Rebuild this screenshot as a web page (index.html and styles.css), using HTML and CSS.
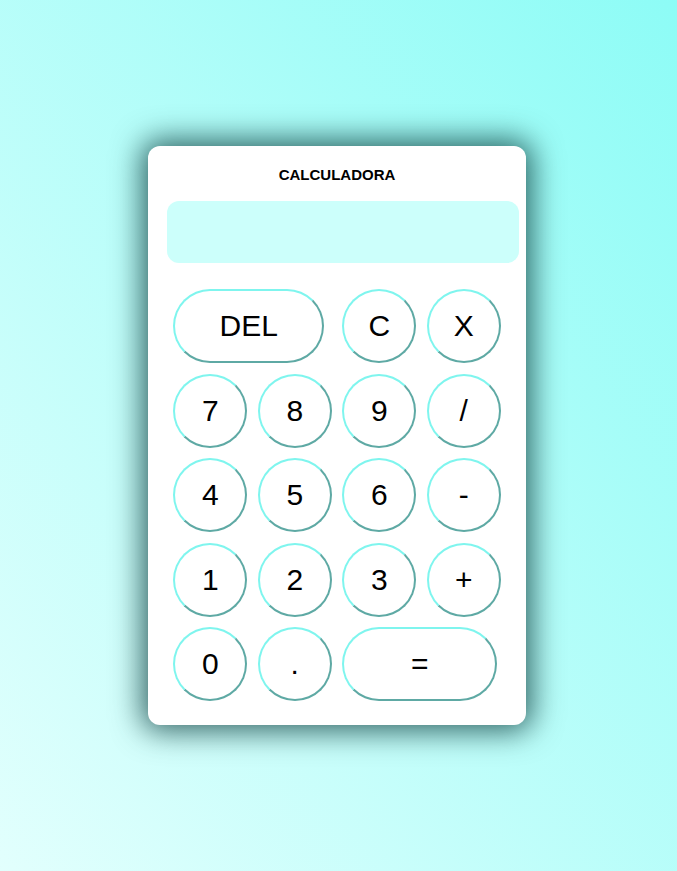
FILE: index.html
```html
<!DOCTYPE html>
<html lang="es">
<head>
<meta charset="utf-8">
<title>Calculadora</title>
<link rel="stylesheet" href="styles.css">
</head>
<body>
<div class="card">
  <h1 class="title">CALCULADORA</h1>
  <div class="display"></div>
  <div class="keys">
    <button class="key key-del">DEL</button>
    <button class="key">C</button>
    <button class="key">X</button>
    <button class="key">7</button>
    <button class="key">8</button>
    <button class="key">9</button>
    <button class="key">/</button>
    <button class="key">4</button>
    <button class="key">5</button>
    <button class="key">6</button>
    <button class="key">-</button>
    <button class="key">1</button>
    <button class="key">2</button>
    <button class="key">3</button>
    <button class="key">+</button>
    <button class="key">0</button>
    <button class="key">.</button>
    <button class="key key-eq">=</button>
  </div>
</div>
</body>
</html>
```
FILE: styles.css
```css
html, body {
  margin: 0;
  height: 100%;
}
body {
  display: flex;
  align-items: center;
  justify-content: center;
  background: linear-gradient(to top right, #e2fffd, #8dfcf6);
  font-family: "Liberation Sans", Arial, sans-serif;
}
.card {
  width: 378px;
  box-sizing: border-box;
  margin-right: 3px;
  padding: 20px 0 24px;
  background: #ffffff;
  border-radius: 12px;
  box-shadow: 0 0 30px 6px rgba(0, 50, 50, 0.75);
  display: flex;
  flex-direction: column;
}
.title {
  margin: 0;
  font-size: 15px;
  line-height: 18px;
  font-weight: 700;
  text-align: center;
  color: #000;
}
.display {
  margin: 17px 0 0 19px;
  width: 352px;
  height: 62px;
  border-radius: 12px;
  background: #ccfffb;
}
.keys {
  margin-top: 26px;
  display: grid;
  grid-template-columns: repeat(4, 74px);
  grid-auto-rows: 74px;
  gap: 10.5px;
  justify-content: center;
}
.key {
  box-sizing: border-box;
  width: 74px;
  height: 74px;
  padding: 0;
  background: #fff;
  border: 2px solid;
  border-color: #7ff5ee #5ea9a4 #5ea9a4 #7ff5ee;
  border-radius: 37px;
  font-family: "Liberation Sans", Arial, sans-serif;
  font-size: 30px;
  color: #000;
}
.key-del {
  grid-column: span 2;
  width: 151px;
}
.key-eq {
  grid-column: span 2;
  width: 155px;
}
```
